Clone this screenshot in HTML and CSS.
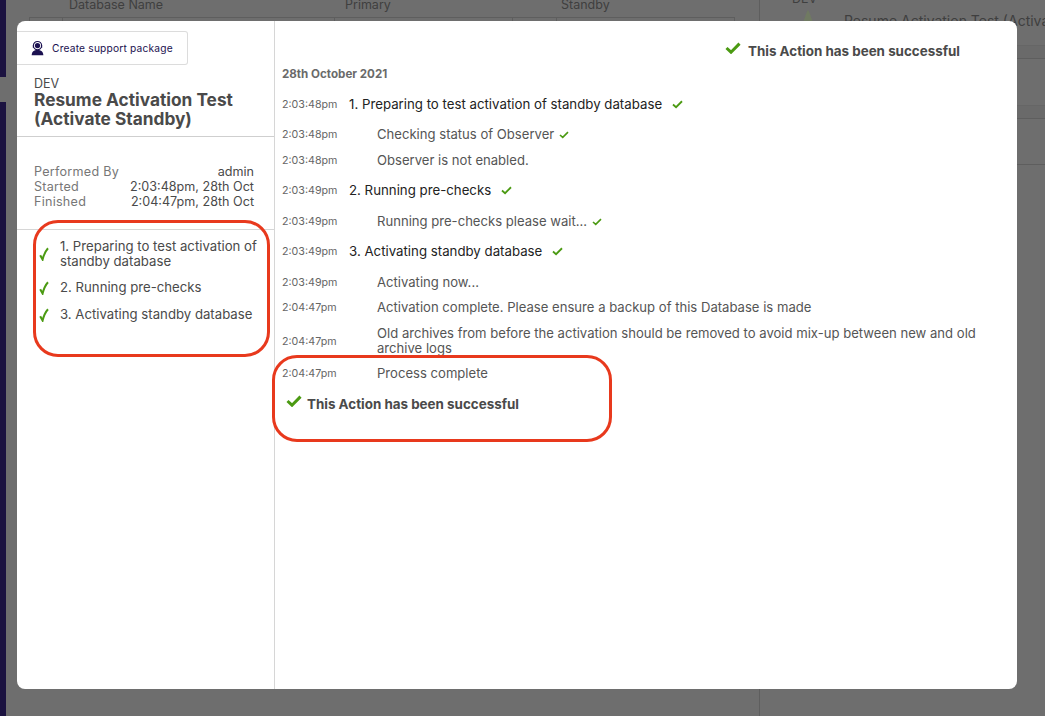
FILE: index.html
```html
<!DOCTYPE html>
<html lang="en">
<head>
<meta charset="utf-8">
<title>Resume Activation Test</title>
<link rel="stylesheet" href="styles.css">
</head>
<body>
<div class="backdrop">
  <div class="nav-bar"><div class="nav-top"></div><div class="nav-gap"></div><div class="nav-bottom"></div></div>
  <div class="bg-table">
    <div class="bg-head"><span class="bg-col-name">Database Name</span><span class="bg-col-primary">Primary</span><span class="bg-col-standby">Standby</span></div>
    <div class="bg-row"><i class="v v1"></i><i class="v v2"></i><i class="v v3"></i><i class="v v4"></i><i class="v v5"></i></div>
  </div>
  <div class="bg-side">
    <div class="bg-dev">DEV</div>
    <div class="bg-side-title">Resume Activation Test (Activate Standby)</div>
    <svg class="bg-cone" viewBox="0 0 14 16"><path d="M7 0C9 3 11 10 13 16H1C3 10 5 3 7 0Z"/></svg>
    <div class="bg-band bg-band-1"></div>
    <div class="bg-band bg-band-2"></div>
    <div class="bg-rule"></div>
  </div>
</div>

<main class="modal">
  <aside class="left">
    <button class="support">
      <svg class="support-icon" viewBox="0 0 16 16"><circle cx="8" cy="5.4" r="4.4" fill="none" stroke="#1b1150" stroke-width="1.2"/><circle cx="8" cy="5.4" r="2.8" fill="#1b1150"/><path d="M3 5.2h1.2v2.4H3zM11.8 5.2H13v2.4h-1.2z" fill="#1b1150"/><path d="M1.8 15.6c0-3.6 2.4-5.6 6.2-5.6s6.2 2 6.2 5.6Z" fill="#1b1150"/></svg>
      <span>Create support package</span>
    </button>
    <header class="head">
      <div class="env">DEV</div>
      <h1>Resume Activation Test (Activate Standby)</h1>
    </header>
    <dl class="meta">
      <div><dt>Performed By</dt><dd>admin</dd></div>
      <div><dt>Started</dt><dd>2:03:48pm, 28th Oct</dd></div>
      <div><dt>Finished</dt><dd>2:04:47pm, 28th Oct</dd></div>
    </dl>
    <ol class="steps">
      <li><svg class="tick-thin" viewBox="0 0 10 14"><path d="M1.2 8.2 3.6 12.6C4.6 8.4 6.4 4 9 1.2" fill="none" stroke="#4b9a12" stroke-width="2"/></svg><span>1. Preparing to test activation of standby database</span></li>
      <li><svg class="tick-thin" viewBox="0 0 10 14"><path d="M1.2 8.2 3.6 12.6C4.6 8.4 6.4 4 9 1.2" fill="none" stroke="#4b9a12" stroke-width="2"/></svg><span>2. Running pre-checks</span></li>
      <li><svg class="tick-thin" viewBox="0 0 10 14"><path d="M1.2 8.2 3.6 12.6C4.6 8.4 6.4 4 9 1.2" fill="none" stroke="#4b9a12" stroke-width="2"/></svg><span>3. Activating standby database</span></li>
    </ol>
  </aside>
  <section class="right">
    <div class="status-top">
      <svg class="tick-big" viewBox="0 0 16 12"><path d="M1.5 6 6 10.2 14.5 1.6" fill="none" stroke="#4b9a12" stroke-width="3"/></svg>
      <strong>This Action has been successful</strong>
    </div>
    <div class="date">28th October 2021</div>
    <div class="log">
      <div class="row step r1"><time>2:03:48pm</time><span>1. Preparing to test activation of standby database<svg class="tick tick-step" viewBox="0 0 12 10"><path d="M1 5 4.4 8 11 1.4" fill="none" stroke="#4b9a12" stroke-width="2"/></svg></span></div>
      <div class="row sub r2"><time>2:03:48pm</time><span>Checking status of Observer<svg class="tick" viewBox="0 0 12 10"><path d="M1 5 4.4 8 11 1.4" fill="none" stroke="#4b9a12" stroke-width="2"/></svg></span></div>
      <div class="row sub r3"><time>2:03:48pm</time><span>Observer is not enabled.</span></div>
      <div class="row step r4"><time>2:03:49pm</time><span>2. Running pre-checks<svg class="tick tick-step" viewBox="0 0 12 10"><path d="M1 5 4.4 8 11 1.4" fill="none" stroke="#4b9a12" stroke-width="2"/></svg></span></div>
      <div class="row sub r5"><time>2:03:49pm</time><span>Running pre-checks please wait...<svg class="tick" viewBox="0 0 12 10"><path d="M1 5 4.4 8 11 1.4" fill="none" stroke="#4b9a12" stroke-width="2"/></svg></span></div>
      <div class="row step r6"><time>2:03:49pm</time><span>3. Activating standby database<svg class="tick tick-step" viewBox="0 0 12 10"><path d="M1 5 4.4 8 11 1.4" fill="none" stroke="#4b9a12" stroke-width="2"/></svg></span></div>
      <div class="row sub r7"><time>2:03:49pm</time><span>Activating now...</span></div>
      <div class="row sub r8"><time>2:04:47pm</time><span>Activation complete. Please ensure a backup of this Database is made</span></div>
      <div class="row sub r9"><time>2:04:47pm</time><span>Old archives from before the activation should be removed to avoid mix-up between new and old archive logs</span></div>
      <div class="row sub r10"><time>2:04:47pm</time><span>Process complete</span></div>
    </div>
    <div class="status-bottom">
      <svg class="tick-big" viewBox="0 0 16 12"><path d="M1.5 6 6 10.2 14.5 1.6" fill="none" stroke="#4b9a12" stroke-width="3"/></svg>
      <strong>This Action has been successful</strong>
    </div>
  </section>
</main>

<div class="callout callout-left"></div>
<div class="callout callout-right"></div>
</body>
</html>
```

FILE: styles.css
```css
* { box-sizing: border-box; }
html, body { margin: 0; height: 100%; }
body {
  width: 1045px; height: 716px; overflow: hidden; position: relative;
  background: #6e6e6e; color: #4a4a4a;
  font-family: "Inter", "Liberation Sans", sans-serif;
}
.backdrop { position: absolute; inset: 0; color: #3f3f3f; font-size: 12.5px; }
.nav-bar { position: absolute; left: 0; top: 0; width: 6px; height: 716px; display: flex; flex-direction: column; }
.nav-top { height: 77px; background: #1b1240; }
.nav-gap { height: 25px; background: #6e6e6e; }
.nav-bottom { flex: 1; background: #1b1240; }
.bg-table { position: absolute; left: 29px; top: 0; width: 706px; }
.bg-head { height: 17px; position: relative; }
.bg-head span { position: absolute; top: -3px; line-height: 15px; }
.bg-col-name { left: 40px; }
.bg-col-primary { left: 316px; }
.bg-col-standby { left: 532px; }
.bg-row { height: 10px; border: 1px solid #5e5e5e; position: relative; }
.v { position: absolute; top: 0; bottom: 0; width: 1px; background: #5e5e5e; }
.v1 { left: 32px; } .v2 { left: 304px; } .v3 { left: 482px; } .v4 { left: 526px; } .v5 { left: 704px; }
.bg-side { position: absolute; left: 759px; top: 0; width: 286px; height: 716px; border-left: 1px solid #5e5e5e; }
.bg-dev { position: absolute; left: 32px; top: -9px; }
.bg-side-title { position: absolute; left: 84px; top: 12px; white-space: nowrap; font-size: 14px; }
.bg-cone { position: absolute; left: 41px; top: 10px; width: 14px; height: 16px; fill: #707a62; }
.bg-band { position: absolute; left: 0; right: 0; background: #6a6a6a; border-top: 1px solid #666; border-bottom: 1px solid #5e5e5e; }
.bg-band-1 { top: 45px; height: 14px; } .bg-band-2 { top: 105px; height: 14px; }
.bg-rule { position: absolute; left: 0; right: 0; top: 164px; height: 1px; background: #5e5e5e; }

.modal {
  position: absolute; left: 17px; top: 21px; width: 1000px; height: 668px;
  background: #fff; border-radius: 8px; display: flex;
}
.left { width: 258px; flex: none; border-right: 1px solid #d6d6d6; display: flex; flex-direction: column; }
.support {
  width: 171px; height: 34px; margin-top: 10px; padding: 0 0 0 13px;
  display: flex; align-items: center; gap: 7px;
  background: #fff; border: 1px solid #dcdcdc; border-left: 0; border-radius: 0 3px 3px 0;
  color: #1b1150; font: 10.2px "Inter", "Liberation Sans", sans-serif; letter-spacing: .2px;
}
.support-icon { width: 15px; height: 16px; flex: none; }
.head { padding: 12px 17px 7px; border-bottom: 1px solid #cfcfcf; height: 72px; }
.env { font-size: 12.5px; line-height: 14px; color: #4a4a4a; }
h1 { margin: -1px 0 0; font-size: 17.3px; line-height: 19px; font-weight: 700; color: #4a4a4a; }
.meta { margin: 0; padding: 27px 20px 0 17px; height: 93px; border-bottom: 1px solid #d6d6d6; font-size: 12.6px; line-height: 15px; }
.meta div { display: flex; justify-content: space-between; }
.meta dt { color: #777; letter-spacing: .25px; }
.meta dd { margin: 0; color: #4a4a4a; }
.steps { list-style: none; margin: 0; padding: 9px 12px 0 22px; font-size: 13.2px; line-height: 15px; color: #4a4a4a; }
.steps li { display: flex; align-items: center; gap: 11px; margin-bottom: 11px; }
.steps li:nth-child(2) { margin-bottom: 12px; }
.tick-thin { width: 10px; height: 14px; flex: none; }

.right { flex: 1; min-width: 0; position: relative; }
.status-top { display: flex; justify-content: flex-end; align-items: center; gap: 7px; height: 18px; margin: 20px 57px 0 0; }
strong { font-size: 13.4px; font-weight: 700; color: #4a4a4a; position: relative; top: 1px; }
.tick-big { width: 16px; height: 12px; flex: none; position: relative; top: -2px; }
.date { margin: 8px 0 0 7px; font-size: 11.6px; font-weight: 700; line-height: 14px; color: #6a6a6a; }
.row { display: grid; grid-template-columns: 67px 1fr; padding: 0 30px 0 7px; line-height: 15px; font-size: 13.1px; }
.row time { font-size: 10.7px; color: #666; }
.row.sub > span { padding-left: 28px; color: #555; }
.row.step > span { color: #222; font-size: 13.25px; }
.tick { width: 10px; height: 8px; margin-left: 5px; }
.tick-step { width: 11px; height: 9px; margin-left: 10px; }
.r1 { margin-top: 16px; } .r2 { margin-top: 15px; } .r3 { margin-top: 11px; } .r4 { margin-top: 15px; }
.r5 { margin-top: 16px; } .r6 { margin-top: 15px; } .r7 { margin-top: 16px; } .r8 { margin-top: 10px; }
.r9 { margin-top: 11px; align-items: center; } .r10 { margin-top: 10px; }
.status-bottom { display: flex; align-items: center; gap: 5px; margin: 13px 0 0 11px; height: 18px; }

.callout { position: absolute; border: 3px solid #e8391d; pointer-events: none; }
.callout-left { left: 33px; top: 220px; width: 237px; height: 137px; border-radius: 25px; }
.callout-right { left: 272px; top: 355px; width: 340px; height: 87px; border-radius: 25px; }
```
